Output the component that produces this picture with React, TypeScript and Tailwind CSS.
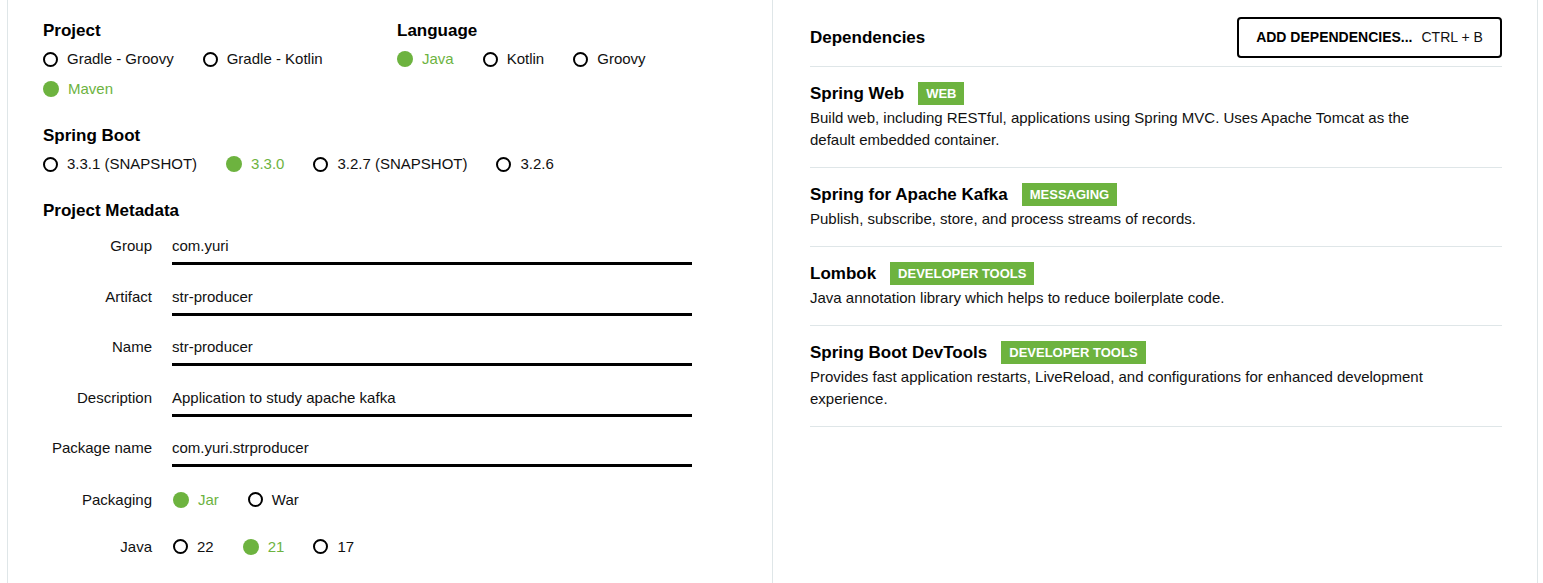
import React from "react";

const GREEN = "text-[#6db33f]";

function Radio({ label, checked }: { label: string; checked?: boolean }) {
  return (
    <div className="flex items-center gap-[9px]">
      {checked ? (
        <span className="block w-[16px] h-[16px] rounded-full bg-[#6db33f]" />
      ) : (
        <span className="block w-[15px] h-[15px] rounded-full border-2 border-black" />
      )}
      <span className={`text-[15px] leading-[20px] ${checked ? GREEN : "text-[#111]"}`}>{label}</span>
    </div>
  );
}

function RadioRow({ items, checked }: { items: string[]; checked: string }) {
  return (
    <div className="flex items-center gap-x-[29px] h-[30px]">
      {items.map((i) => (
        <Radio key={i} label={i} checked={i === checked} />
      ))}
    </div>
  );
}

function Heading({ children }: { children: React.ReactNode }) {
  return <div className="text-[17px] leading-[20px] font-bold text-black h-[20px]">{children}</div>;
}

function Field({ label, value }: { label: string; value: string }) {
  return (
    <div className="flex h-[50.5px]">
      <div className="w-[109px] text-right pt-[5px] text-[15px] leading-[20px] text-[#111]">{label}</div>
      <div className="ml-[20px] w-[520px] h-[34px] border-b-[3px] border-black pt-[5px] text-[15px] leading-[20px] text-[#111]">
        {value}
      </div>
    </div>
  );
}

function MetaRadio({ label, items, checked, className }: { label: string; items: string[]; checked: string; className?: string }) {
  return (
    <div className={`flex items-center h-[30px] ${className ?? ""}`}>
      <div className="w-[109px] text-right text-[15px] leading-[20px] text-[#111]">{label}</div>
      <div className="ml-[21px]">
        <RadioRow items={items} checked={checked} />
      </div>
    </div>
  );
}

function Badge({ children }: { children: React.ReactNode }) {
  return (
    <span className="inline-flex items-center h-[23px] px-[8px] bg-[#6db33f] text-white font-bold text-[13px] leading-[23px]">
      {children}
    </span>
  );
}

function Dep({ title, badge, desc }: { title: string; badge: string; desc: string }) {
  return (
    <div className="pt-[15px] pb-[16px] border-b border-[#dfe6e8]">
      <div className="flex items-center gap-[14px] h-[23px]">
        <span className="text-[17px] font-bold leading-[20px] text-black">{title}</span>
        <Badge>{badge}</Badge>
      </div>
      <div className="mt-[2px] max-w-[630px] text-[15px] leading-[22px] text-[#111]">{desc}</div>
    </div>
  );
}

export default function App() {
  return (
    <div className="w-[1543px] h-[583px] bg-white flex pl-[7px] font-['Liberation_Sans',Arial,sans-serif] overflow-hidden">
      {/* Left column */}
      <div className="w-[766px] h-full border-l border-r border-[#dfe6e8] pl-[35px] pt-[21px]">
        <div className="flex">
          <div className="w-[354px]">
            <Heading>Project</Heading>
            <div className="mt-[3px]">
              <RadioRow items={["Gradle - Groovy", "Gradle - Kotlin"]} checked="" />
              <RadioRow items={["Maven"]} checked="Maven" />
            </div>
          </div>
          <div>
            <Heading>Language</Heading>
            <div className="mt-[3px]">
              <RadioRow items={["Java", "Kotlin", "Groovy"]} checked="Java" />
            </div>
          </div>
        </div>

        <div className="mt-[22px]">
          <Heading>Spring Boot</Heading>
          <div className="mt-[3px]">
            <RadioRow items={["3.3.1 (SNAPSHOT)", "3.3.0", "3.2.7 (SNAPSHOT)", "3.2.6"]} checked="3.3.0" />
          </div>
        </div>

        <div className="mt-[22px]">
          <Heading>Project Metadata</Heading>
          <div className="mt-[10px]">
            <Field label="Group" value="com.yuri" />
            <Field label="Artifact" value="str-producer" />
            <Field label="Name" value="str-producer" />
            <Field label="Description" value="Application to study apache kafka" />
            <Field label="Package name" value="com.yuri.strproducer" />
            <MetaRadio label="Packaging" items={["Jar", "War"]} checked="Jar" className="mt-[1px]" />
            <MetaRadio label="Java" items={["22", "21", "17"]} checked="21" className="mt-[17px]" />
          </div>
        </div>
      </div>

      {/* Right column */}
      <div className="w-[765px] h-full border-r border-[#dfe6e8] pl-[37px] pr-[35px] pt-[17px]">
        <div className="flex items-center justify-between h-[41px]">
          <span className="text-[17px] font-bold text-black leading-[20px]">Dependencies</span>
          <button className="h-[41px] w-[265px] border-2 border-black rounded-[4px] flex items-center justify-center gap-[9px] bg-white">
            <span className="text-[14px] font-bold text-black">ADD DEPENDENCIES...</span>
            <span className="text-[14px] text-[#111]">CTRL + B</span>
          </button>
        </div>
        <div className="mt-[8px] border-t border-[#dfe6e8]">
          <Dep
            title="Spring Web"
            badge="WEB"
            desc="Build web, including RESTful, applications using Spring MVC. Uses Apache Tomcat as the default embedded container."
          />
          <Dep
            title="Spring for Apache Kafka"
            badge="MESSAGING"
            desc="Publish, subscribe, store, and process streams of records."
          />
          <Dep
            title="Lombok"
            badge="DEVELOPER TOOLS"
            desc="Java annotation library which helps to reduce boilerplate code."
          />
          <Dep
            title="Spring Boot DevTools"
            badge="DEVELOPER TOOLS"
            desc="Provides fast application restarts, LiveReload, and configurations for enhanced development experience."
          />
        </div>
      </div>
    </div>
  );
}
